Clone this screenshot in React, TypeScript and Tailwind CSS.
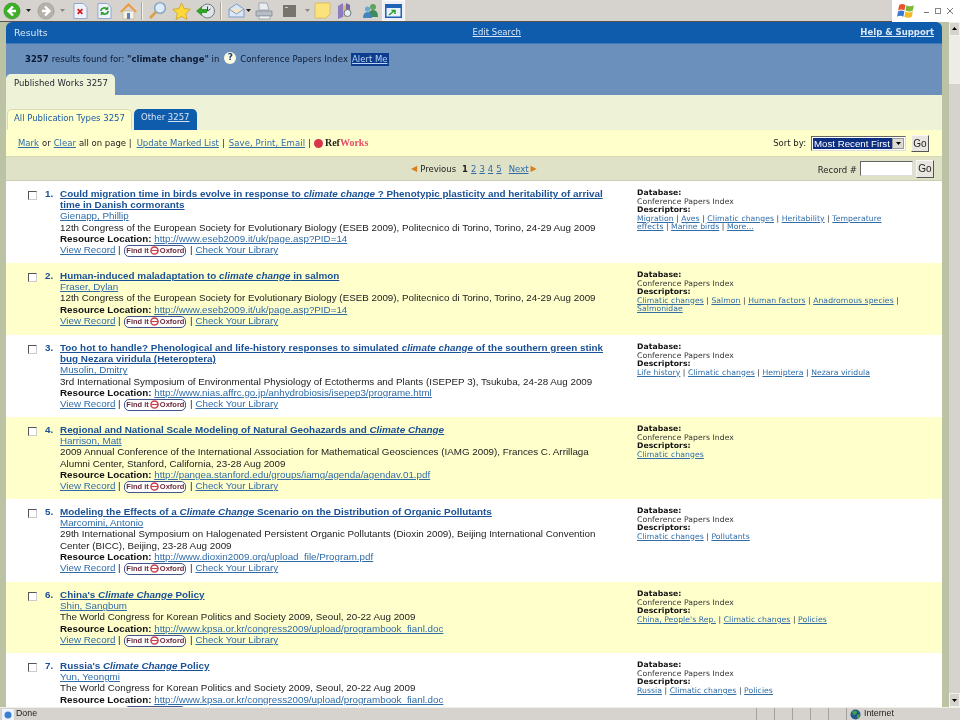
// Results page of a bibliographic database inside an old IE window.
const verdana = "font-['DejaVu_Sans',sans-serif]";

type Row = {
    title: React.ReactNode;
    author: string;
    source: string;
    url: string;
    descriptors: string[];
    height: string;
    bg: string;
};

const CC = ({ children }: { children: React.ReactNode }) => <i>{children}</i>;

const rows: Row[] = [
    {
        title: <>Could migration time in birds evolve in response to <CC>climate change</CC> ? Phenotypic plasticity and heritability of arrival time in Danish cormorants</>,
        author: "Gienapp, Phillip",
        source: "12th Congress of the European Society for Evolutionary Biology (ESEB 2009), Politecnico di Torino, Torino, 24-29 Aug 2009",
        url: "http://www.eseb2009.it/uk/page.asp?PID=14",
        descriptors: ["Migration", "Aves", "Climatic changes", "Heritability", "Temperature effects", "Marine birds", "More..."],
        height: "h-[82px]",
        bg: "bg-white",
    },
    {
        title: <>Human-induced maladaptation to <CC>climate change</CC> in salmon</>,
        author: "Fraser, Dylan",
        source: "12th Congress of the European Society for Evolutionary Biology (ESEB 2009), Politecnico di Torino, Torino, 24-29 Aug 2009",
        url: "http://www.eseb2009.it/uk/page.asp?PID=14",
        descriptors: ["Climatic changes", "Salmon", "Human factors", "Anadromous species", "Salmonidae"],
        height: "h-[72px]",
        bg: "bg-[#ffffcc]",
    },
    {
        title: <>Too hot to handle? Phenological and life-history responses to simulated <CC>climate change</CC> of the southern green stink bug Nezara viridula (Heteroptera)</>,
        author: "Musolin, Dmitry",
        source: "3rd International Symposium of Environmental Physiology of Ectotherms and Plants (ISEPEP 3), Tsukuba, 24-28 Aug 2009",
        url: "http://www.nias.affrc.go.jp/anhydrobiosis/isepep3/programe.html",
        descriptors: ["Life history", "Climatic changes", "Hemiptera", "Nezara viridula"],
        height: "h-[82px]",
        bg: "bg-white",
    },
    {
        title: <>Regional and National Scale Modeling of Natural Geohazards and <CC>Climate Change</CC></>,
        author: "Harrison, Matt",
        source: "2009 Annual Conference of the International Association for Mathematical Geosciences (IAMG 2009), Frances C. Arrillaga Alumni Center, Stanford, California, 23-28 Aug 2009",
        url: "http://pangea.stanford.edu/groups/iamg/agenda/agendav.01.pdf",
        descriptors: ["Climatic changes"],
        height: "h-[82px]",
        bg: "bg-[#ffffcc]",
    },
    {
        title: <>Modeling the Effects of a <CC>Climate Change</CC> Scenario on the Distribution of Organic Pollutants</>,
        author: "Marcomini, Antonio",
        source: "29th International Symposium on Halogenated Persistent Organic Pollutants (Dioxin 2009), Beijing International Convention Center (BICC), Beijing, 23-28 Aug 2009",
        url: "http://www.dioxin2009.org/upload_file/Program.pdf",
        descriptors: ["Climatic changes", "Pollutants"],
        height: "h-[83px]",
        bg: "bg-white",
    },
    {
        title: <>China's <CC>Climate Change</CC> Policy</>,
        author: "Shin, Sangbum",
        source: "The World Congress for Korean Politics and Society 2009, Seoul, 20-22 Aug 2009",
        url: "http://www.kpsa.or.kr/congress2009/upload/programbook_fianl.doc",
        descriptors: ["China, People's Rep.", "Climatic changes", "Policies"],
        height: "h-[71px]",
        bg: "bg-[#ffffcc]",
    },
    {
        title: <>Russia's <CC>Climate Change</CC> Policy</>,
        author: "Yun, Yeongmi",
        source: "The World Congress for Korean Politics and Society 2009, Seoul, 20-22 Aug 2009",
        url: "http://www.kpsa.or.kr/congress2009/upload/programbook_fianl.doc",
        descriptors: ["Russia", "Climatic changes", "Policies"],
        height: "h-[72px]",
        bg: "bg-white",
    },
];

function Arrow({ color }: { color: string }) {
    return (
        <svg width="18" height="18" viewBox="0 0 18 18">
            <circle cx="9" cy="9" r="8.300" fill={color} stroke="#00000030" strokeWidth="0.600" />
            <path d="M10 4.500 5.500 9l4.500 4.500M6 9h7" fill="none" stroke="#fff" strokeWidth="2.400" />
        </svg>
    );
}

function Caret({ color = "#222" }: { color?: string }) {
    return (
        <svg width="5" height="3" viewBox="0 0 5 3">
            <path d="M0 0h5L2.500 3z" fill={color} />
        </svg>
    );
}

function Toolbar() {
    return (
        <div className="h-[22px] shrink-0 flex items-center bg-[#d6d3ce] border-b border-[#55534e] relative">
            <div className="flex items-center pl-[3px] h-full">
                <Arrow color="#3fae2a" />
                <div className="ml-[5px]"><Caret /></div>
                <div className="ml-[6px] scale-x-[-1]"><Arrow color="#b3b1a8" /></div>
                <div className="ml-[5px]"><Caret color="#888" /></div>
                <svg className="ml-[8px]" width="15" height="18" viewBox="0 0 16 18">
                    <path d="M1 1h10l4 4v12H1z" fill="#eef2fb" stroke="#8fa3cf" />
                    <path d="M5 7l5 5M10 7l-5 5" stroke="#d92020" strokeWidth="2" />
                </svg>
                <svg className="ml-[9px]" width="15" height="18" viewBox="0 0 16 18">
                    <path d="M1 1h10l4 4v12H1z" fill="#eef2fb" stroke="#8fa3cf" />
                    <path d="M4 9a4 4 0 0 1 7-2M12 9a4 4 0 0 1-7 2" fill="none" stroke="#2ca02c" strokeWidth="1.800" />
                    <path d="M12 4v4H8.500zM4 14v-4h3.500z" fill="#2ca02c" />
                </svg>
                <svg className="ml-[7px]" width="19" height="18" viewBox="0 0 19 18">
                    <path d="M4 9v8h11V9z" fill="#f5f1e6" stroke="#b9a98a" strokeWidth="0.600" />
                    <path d="M9.500 1 1 9.500l1.500 1L9.500 4l7 6.500 1.500-1z" fill="#ee9a3c" />
                    <path d="M8 11h3v6H8z" fill="#5a82b8" />
                </svg>
                <div className="ml-[3px] w-px h-[18px] bg-[#aaa69e] border-r border-[#f3f1ec] box-content" />
                <svg className="ml-[5px]" width="20" height="19" viewBox="0 0 20 19">
                    <circle cx="12" cy="7" r="5.400" fill="#dcebfa" stroke="#7f9db9" strokeWidth="1.400" />
                    <path d="M8 11 2 17" stroke="#d9a04a" strokeWidth="2.600" />
                </svg>
                <svg className="ml-[4px]" width="19" height="18" viewBox="0 0 19 18">
                    <path d="M9.500 1l2.600 5.600 6.200.7-4.600 4.200 1.300 6-5.500-3.100-5.500 3.100 1.300-6L.7 7.300l6.200-.7z" fill="#ffd83a" stroke="#c99a18" strokeWidth="0.700" />
                </svg>
                <svg className="ml-[5px]" width="20" height="16" viewBox="0 0 20 16">
                    <circle cx="11.500" cy="8" r="7" fill="#dfe5e8" stroke="#6f7d80" />
                    <path d="M11.500 3.500V8l3-2" fill="none" stroke="#444" strokeWidth="1" />
                    <path d="M0 8l6-5v3h5v4H6v3z" fill="#34a02c" />
                </svg>
                <div className="ml-[4px] w-px h-[18px] bg-[#aaa69e] border-r border-[#f3f1ec] box-content" />
                <svg className="ml-[6px]" width="17" height="15" viewBox="0 0 17 15">
                    <path d="M1 6l7.500-5L16 6v8H1z" fill="#dbe6f7" stroke="#7f9bc8" />
                    <path d="M1 6l7.500 5L16 6" fill="#f5e7c0" stroke="#7f9bc8" />
                </svg>
                <div className="ml-[1px]"><Caret /></div>
                <svg className="ml-[4px]" width="18" height="18" viewBox="0 0 18 18">
                    <path d="M4 1h8l2 7H4z" fill="#e9edf2" stroke="#8795a5" strokeWidth="0.700" />
                    <path d="M1 9h16v5H1z" fill="#b6bdc4" stroke="#7e858c" strokeWidth="0.700" />
                    <path d="M4 14h11v3H4z" fill="#eef0f2" stroke="#8795a5" strokeWidth="0.700" />
                </svg>
                <svg className="ml-[10px]" width="13" height="12" viewBox="0 0 13 12">
                    <path d="M0 0h13v12H0z" fill="#77746e" />
                    <path d="M2 2h3v1H2z" fill="#cfcdc7" />
                </svg>
                <div className="ml-[9px]"><Caret color="#888" /></div>
                <svg className="ml-[4px]" width="17" height="17" viewBox="0 0 17 17">
                    <path d="M1 2q0-1 1-1h14v11l-4 4H2q-1 0-1-1z" fill="#fbe27c" stroke="#d8b84c" strokeWidth="0.800" />
                </svg>
                <svg className="ml-[6px]" width="16" height="18" viewBox="0 0 16 18">
                    <path d="M1 4l5-3v14l-5 2z" fill="#8d7cc0" />
                    <path d="M6 3h3v12H6z" fill="#d6c26a" />
                    <path d="M9 1l4 2v9H9z" fill="#7767ae" />
                    <circle cx="10.500" cy="11" r="3.500" fill="#e3edf7" stroke="#777" />
                </svg>
                <svg className="ml-[9px]" width="17" height="16" viewBox="0 0 17 16">
                    <circle cx="11" cy="4" r="3" fill="#5ca55a" />
                    <path d="M6 14q0-7 5-7t5 7z" fill="#3d8a5a" />
                    <circle cx="5.500" cy="6" r="2.600" fill="#68a9d6" />
                    <path d="M1 15q0-6 4.500-6T10 15z" fill="#4286be" />
                </svg>
                <div className="ml-[3px] w-[23px] h-[21px] bg-[#eef0f6] border border-[#f8f8fb] flex items-center justify-center">
                    <svg width="17" height="14" viewBox="0 0 17 14">
                        <path d="M0 0h17v14H0z" fill="#1e63b5" />
                        <path d="M1.500 4h14v8.500h-14z" fill="#e9f1fb" />
                        <path d="M4 11l5-4M6.500 6.500H10V10" fill="none" stroke="#2f9f2f" strokeWidth="1.500" />
                    </svg>
                </div>
            </div>
            <div className="absolute right-0 top-0 w-[68px] h-[22px] bg-white flex items-center pl-[5px]">
                <svg width="19" height="17" viewBox="0 0 18 16">
                    <path d="M2 2q3-2 6 0L7 7Q4 5 1 7z" fill="#e8552c" />
                    <path d="M9 2q3 2 7 0l-1 5q-3 2-7 0z" fill="#7cb83a" />
                    <path d="M1 8q3-2 6 0l-1 5q-3-2-6 0z" fill="#3b78d4" />
                    <path d="M8 8q3 2 7 0l-1 5q-3 2-7 0z" fill="#f5b924" />
                </svg>
                <div className="ml-[8px] flex items-center text-[#888] gap-[6px]">
                    <div className="w-[5px] h-px bg-[#777] mt-[3px]" />
                    <div className="w-[6px] h-[6px] border border-[#888]" />
                    <svg width="6" height="6" viewBox="0 0 6 6"><path d="M0 0l6 6M6 0 0 6" stroke="#777" /></svg>
                </div>
            </div>
        </div>
    );
}

function GoButton({ size }: { size: string }) {
    return (
        <div className={`${size} bg-[#e8e6df] border border-t-[#f8f8f8] border-l-[#f8f8f8] border-r-[#555] border-b-[#555] flex items-center justify-center text-[10px] text-[#222] font-['Liberation_Sans',sans-serif]`}>
            Go
        </div>
    );
}

function ResultsHeader() {
    return (
        <>
            <div className={`h-[21px] shrink-0 bg-[#0f5cac] rounded-t-[6px] flex items-center text-[8.500px] text-[#dbe7f5] ${verdana}`}>
                <span className="ml-[8px] text-[9.300px]">Results</span>
                <a className="ml-[425px] underline">Edit Search</a>
                <a className="ml-auto mr-[8px] underline font-bold">Help &amp; Support</a>
            </div>
            <div className="h-[52px] shrink-0 bg-[#6b90bc] border-t border-[#3f78b8] flex flex-col justify-between">
                <div className={`flex items-center pl-[19px] pt-[9px] text-[8.500px] text-[#0c1a33] ${verdana}`}>
                    <b>3257</b>
                    <span className="ml-[3px] mr-[2px]">results found for: <b>"climate change"</b> in</span>
                    <div className="ml-[3px] -mt-[3px] w-[12px] h-[12px] rounded-full bg-[#fbfbe0] flex items-center justify-center text-[9px] font-bold text-[#1b3f7a]">?</div>
                    <span className="ml-[4px] tracking-[0.08px]">Conference Papers Index</span>
                    <a className="ml-[3px] px-px bg-[#0d3c8e] text-[#b8d4f5] underline">Alert Me</a>
                </div>
                <div className={`w-[109px] h-[21px] bg-[#eef2d6] rounded-t-[5px] flex items-center pl-[8px] pb-[3px] text-[8.500px] text-[#1c2430] ${verdana}`}>
                    Published Works 3257
                </div>
            </div>
            <div className={`h-[35px] shrink-0 bg-[#eef2d6] flex items-end pl-px gap-[2px] text-[8.500px] ${verdana}`}>
                <div className="w-[125px] h-[21px] bg-[#ffffcc] border-t border-x border-[#dcdcb4] rounded-t-[5px] flex items-center pl-[6px] pb-[4px] text-[#1c5ca4]">
                    All Publication Types 3257
                </div>
                <div className="w-[63px] h-[21px] bg-[#0f5cac] rounded-t-[5px] flex items-center pl-[7px] pb-[4px] text-[#d5e3f3]">
                    Other&nbsp;<a className="underline">3257</a>
                </div>
            </div>
            <div className={`h-[27px] shrink-0 bg-[#ffffcc] border-b border-[#d8d8b4] flex items-center pl-[12px] pr-[13px] text-[8.500px] text-[#222] ${verdana}`}>
                <a className="underline text-[#2f6ca8]">Mark</a>
                <span className="ml-[3px]">or</span>
                <a className="ml-[3px] underline text-[#2f6ca8]">Clear</a>
                <span className="ml-[3px]">all on page |</span>
                <a className="ml-[5px] underline text-[#2f6ca8]">Update Marked List</a>
                <span className="ml-[3px]">|</span>
                <a className="ml-[4px] underline text-[#2f6ca8] tracking-[0.08px]">Save, Print, Email</a>
                <span className="ml-[3px]">|</span>
                <div className="ml-[3px] w-[9px] h-[9px] rounded-full bg-[#d8344c]" />
                <span className="ml-[2px] -mt-[1px] font-bold font-['Liberation_Serif',serif] text-[10px]">Ref<span className="text-[#e0506a]">Works</span></span>
                <span className="ml-auto">Sort by:</span>
                <div className="ml-[5px] w-[95px] h-[15px] bg-white border border-t-[#666] border-l-[#666] border-r-[#ddd] border-b-[#ddd] flex items-center p-px">
                    <div className="flex-1 h-full bg-[#0d2f82] text-white text-[9.700px] leading-[11px] pl-[1px] font-['Liberation_Sans',sans-serif] whitespace-nowrap overflow-hidden">Most Recent First</div>
                    <div className="w-[12px] h-full bg-[#dcdad3] border border-[#999] flex items-center justify-center"><Caret color="#000" /></div>
                </div>
                <div className="ml-[5px]"><GoButton size="w-[18px] h-[17px]" /></div>
            </div>
            <div className={`h-[24px] shrink-0 bg-[#e0e2c8] border-b border-[#ccceb4] flex items-center pl-[405px] pr-[8px] text-[8.500px] text-[#222] ${verdana}`}>
                <span className="text-[#d9801e] text-[8px]">◀</span>
                <span className="ml-[3px] mt-px">Previous</span>
                <b className="ml-[6px] mt-px">1</b>
                {["2", "3", "4", "5"].map((n) => (
                    <a key={n} className="ml-[3px] mt-px underline text-[#2f6ca8]">{n}</a>
                ))}
                <a className="ml-[7px] mt-px underline text-[#2f6ca8]">Next</a>
                <span className="ml-[2px] text-[#d9801e] text-[8px]">▶</span>
                <span className="ml-auto mt-[3px] mr-[-1px]">Record #</span>
                <div className="ml-[4px] w-[53px] h-[15px] bg-white border border-t-[#666] border-l-[#666] border-r-[#ddd] border-b-[#ddd]" />
                <div className="ml-[3px]"><GoButton size="w-[18px] h-[18px]" /></div>
            </div>
        </>
    );
}

function FindIt() {
    return (
        <span className="inline-flex items-center align-middle h-[12px] w-[62px] mx-px translate-y-[1px] border border-[#44558c] rounded-[5px] bg-white justify-center text-[7.500px] font-bold text-[#6a2a3a] leading-none whitespace-nowrap -mt-[1px]">
            Find it
            <svg className="mx-px shrink-0" width="9" height="9" viewBox="0 0 8 8">
                <circle cx="4" cy="4" r="3.200" fill="none" stroke="#c9404a" strokeWidth="1.300" />
                <path d="M1 4h6" stroke="#c9404a" />
            </svg>
            Oxford
        </span>
    );
}

function ResultRow({ row, index }: { row: Row; index: number }) {
    return (
        <div className={`${row.height} shrink-0 flex ${row.bg} pt-[7px] leading-[11.200px] text-[9.800px] text-[#222] font-['Liberation_Sans',sans-serif]`}>
            <div className="w-[31px] pl-[22px] pt-[3px] shrink-0">
                <div className="w-[9px] h-[9px] bg-white border border-t-[#555] border-l-[#555] border-r-[#ccc] border-b-[#ccc]" />
            </div>
            <div className="w-[23px] pl-[8px] shrink-0 font-bold text-[#1a4f96]">{index + 1}.</div>
            <div className="w-[548px] shrink-0">
                <a className="font-bold underline text-[#1a5196] text-[9.900px]">{row.title}</a>
                <div><a className="underline text-[#2f6ca8]">{row.author}</a></div>
                <div>{row.source}</div>
                <div>
                    <b className="text-[#111]">Resource Location:</b>{" "}
                    <a className="underline text-[#2f6ca8]">{row.url}</a>
                </div>
                <div className="h-[11.200px]">
                    <a className="underline text-[#2f6ca8]">View Record</a> | <FindIt /> | <a className="underline text-[#2f6ca8]">Check Your Library</a>
                </div>
            </div>
            <div className={`ml-[29px] w-[262px] mt-[1px] text-[7.700px] leading-[8.500px] tracking-[0.05px] text-[#333] ${verdana}`}>
                <b className="block text-[#111]">Database:</b>
                <div>Conference Papers Index</div>
                <b className="block text-[#111]">Descriptors:</b>
                <div>
                    {row.descriptors.map((d, i) => (
                        <span key={d}>
                            {i > 0 && " | "}
                            <a className="underline text-[#2f6ca8]">{d}</a>
                        </span>
                    ))}
                </div>
            </div>
        </div>
    );
}

function Scrollbar() {
    return (
        <div className="w-[11px] shrink-0 bg-[#eeece6] flex flex-col">
            <div className="h-[14px] bg-[#d6d3ce] border border-[#f3f1ec] flex items-center justify-center rotate-180"><Caret color="#000" /></div>
            <div className="h-[48px]" />
            <div className="flex-1 bg-[#d6d3ce]" />
            <div className="h-[14px] bg-[#d6d3ce] border border-[#f3f1ec] flex items-center justify-center"><Caret color="#000" /></div>
        </div>
    );
}

function StatusBar() {
    return (
        <div className="h-[13px] shrink-0 bg-[#d6d3ce] border-t border-[#f0eee9] flex items-center text-[8.800px] text-[#222] font-['Liberation_Sans',sans-serif]">
            <svg className="ml-[2px]" width="12" height="11" viewBox="0 0 12 11">
                <path d="M0 0h12v11H0z" fill="#eef3fb" />
                <circle cx="6" cy="6" r="3.500" fill="#3a7fd0" />
            </svg>
            <span className="ml-[2px]">Done</span>
            <div className="ml-auto flex h-full">
                {[0, 1, 2, 3, 4].map((i) => (
                    <div key={i} className="w-[18px] border-l border-[#a5a29b]" />
                ))}
                <div className="w-[114px] border-l border-[#a5a29b] flex items-center pl-[3px]">
                    <svg width="11" height="11" viewBox="0 0 11 11">
                        <circle cx="5.500" cy="5.500" r="5" fill="#24568f" />
                        <path d="M2 3q2-2 4-1t0 3-3 0zM7 6l3-1-1 4-2 0z" fill="#3fa53f" />
                    </svg>
                    <span className="ml-[3px]">Internet</span>
                </div>
            </div>
        </div>
    );
}

export default function App() {
    return (
        <div className="w-[960px] h-[720px] flex flex-col overflow-hidden bg-[#d6d3ce] blur-[0.35px]">
            <Toolbar />
            <div className="flex-1 min-h-0 flex bg-[#bcc3a4]">
                <div className="w-[6px] shrink-0" />
                <div className="flex-1 min-w-0 flex flex-col overflow-hidden">
                    <ResultsHeader />
                    {rows.map((row, i) => (
                        <ResultRow key={i} row={row} index={i} />
                    ))}
                </div>
                <div className="w-[7px] shrink-0" />
                <Scrollbar />
            </div>
            <StatusBar />
        </div>
    );
}
